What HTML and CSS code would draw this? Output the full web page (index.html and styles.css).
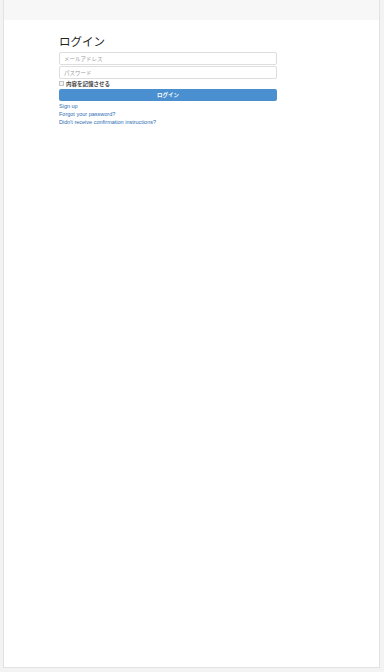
FILE: index.html
```html
<!DOCTYPE html>
<html lang="ja">
<head>
    <meta charset="UTF-8">
    <title>ログイン</title>
    <link rel="stylesheet" href="styles.css">
</head>
<body>
    <div class="page">
        <div class="topbar"></div>
        <div class="content">
            <h2 class="title">ログイン</h2>
            <form class="login_form">
                <input class="field" type="email" placeholder="メールアドレス">
                <input class="field" type="password" placeholder="パスワード">
                <label class="remember"><span class="check"></span>内容を記憶させる</label>
                <button class="btn" type="button">ログイン</button>
            </form>
            <ul class="links">
                <li><a href="#">Sign up</a></li>
                <li><a href="#">Forgot your password?</a></li>
                <li><a href="#">Didn't receive confirmation instructions?</a></li>
            </ul>
        </div>
    </div>
</body>
</html>
```

FILE: styles.css
```css
*{
    margin:0;
    padding:0;
    box-sizing:border-box;
}
ul,li{
    list-style:none;
}
body{
    background:#f3f3f3;
    font-family:"Liberation Sans","Noto Sans CJK JP",sans-serif;
    color:#333;
}
.page{
    margin:0 4px 0 3px;
    height:668px;
    background:#fff;
    border:1px solid #e2e2e2;
    border-top:none;
}
.topbar{
    height:20px;
    background:#f7f7f7;
}
.content{
    width:218px;
    margin-left:55px;
    padding-top:13px;
}
.title{
    font-size:11.5px;
    font-weight:normal;
    line-height:18px;
    margin-bottom:1px;
    color:#222;
}
.login_form{
    display:flex;
    flex-direction:column;
    gap:1px;
}
.field{
    display:block;
    width:100%;
    height:13px;
    border:1px solid #ddd;
    border-radius:2px;
    padding:0 4px;
    font-size:5.5px;
    font-family:inherit;
    outline:none;
}
.field::placeholder{
    color:#999;
}
.remember{
    display:flex;
    align-items:center;
    gap:2px;
    height:7px;
    font-size:5.5px;
    font-weight:bold;
    color:#444;
}
.check{
    display:inline-block;
    width:5px;
    height:5px;
    border:1px solid #c4c4c4;
    background:#f4f4f4;
}
.btn{
    display:block;
    width:100%;
    height:12px;
    margin-top:1px;
    border:none;
    border-radius:2px;
    background:#4a90d0;
    color:#fff;
    font-size:5.5px;
    font-weight:bold;
    font-family:inherit;
}
.links{
    margin-top:1px;
}
.links li{
    line-height:8px;
    font-size:5.5px;
}
.links a{
    color:#2a6db3;
    text-decoration:none;
}
```
